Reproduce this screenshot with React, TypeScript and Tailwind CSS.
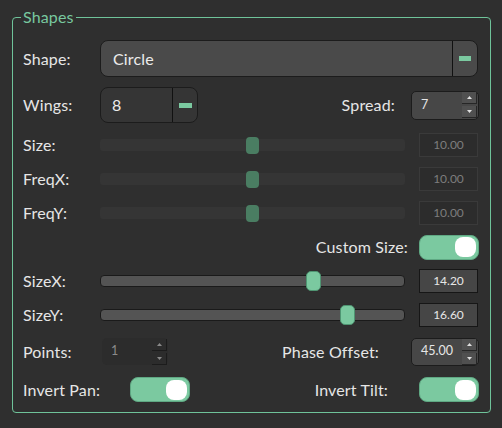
const font = { fontFamily: 'Lato, "Noto Sans", sans-serif' };

function Arrows({ disabled = false }: { disabled?: boolean }) {
  const btn = disabled
    ? "bg-[#2c2c2c] border-r border-b border-[#1c1c1c]"
    : "bg-[#505050] border-r border-b border-[#262626]";
  const fill = disabled ? "#8a8a8a" : "#e0e0e0";
  return (
    <div className="flex flex-col gap-[2px] justify-center">
      <div className={`w-[15px] h-[12px] flex items-center justify-center ${btn}`}>
        <svg width="5" height="3" viewBox="0 0 5 3">
          <polygon points="2.5,0 5,3 0,3" fill={fill} />
        </svg>
      </div>
      <div className={`w-[15px] h-[12px] flex items-center justify-center ${btn}`}>
        <svg width="5" height="3" viewBox="0 0 5 3">
          <polygon points="0,0 5,0 2.5,3" fill={fill} />
        </svg>
      </div>
    </div>
  );
}

function SpinBox({ value, w, h, disabled = false }: { value: string; w: string; h: string; disabled?: boolean }) {
  return (
    <div
      className={`${w} ${h} flex items-center justify-between pl-[9px] pr-[1px] rounded-[5px] text-[12.5px] tracking-normal ${
        disabled ? "bg-[#2c2c2c] text-[#8a8a8a]" : "bg-[#474747] border border-[#1c1c1c] text-[#e6e6e6]"
      }`}
    >
      <span>{value}</span>
      <Arrows disabled={disabled} />
    </div>
  );
}

function Toggle() {
  return (
    <div className="w-[60px] h-[25px] rounded-[8px] bg-[#7bc9a0] border border-[#5fa883] flex items-center justify-end pr-[2px]">
      <div className="w-[21px] h-[20px] rounded-[8px] bg-white" />
    </div>
  );
}

function DisabledSlider({ label }: { label: string }) {
  return (
    <div className="flex items-center h-[24px] mt-[10px]">
      <span className="w-[77px] text-[#e6e6e6]">{label}</span>
      <div className="relative w-[305px] h-[12px] rounded-[3px] bg-[#353535] flex items-center">
        <div className="absolute left-[146px] w-[13px] h-[17px] rounded-[4px] bg-[#4a7d62]" />
      </div>
      <div className="ml-[14px] w-[59px] h-[24px] bg-[#2c2c2c] border border-[#3a3a3a] flex items-center justify-center text-[12px] tracking-normal text-[#7d7d7d]">
        10.00
      </div>
    </div>
  );
}

function Slider({ label, pos, value }: { label: string; pos: number; value: string }) {
  return (
    <div className="flex items-center h-[24px] mt-[10px]">
      <span className="w-[77px] text-[#e6e6e6]">{label}</span>
      <div className="relative w-[305px] h-[12px] rounded-[4px] bg-[#545454] border border-[#1a1a1a] flex items-center">
        <div
          className="absolute w-[15px] h-[20px] rounded-[5px] bg-[#7bc9a0] border border-[#4f9572]"
          style={{ left: pos }}
        />
      </div>
      <div className="ml-[14px] w-[59px] h-[24px] bg-[#464646] border border-[#161616] flex items-center justify-center text-[12px] tracking-normal text-[#e6e6e6]">
        {value}
      </div>
    </div>
  );
}

export default function App() {
  return (
    <div className="w-[502px] h-[428px] bg-[#2f2f2f] pt-[8px] pl-[12px] text-[16px] tracking-[0.15px]" style={font}>
      <fieldset className="w-[479px] border border-[#6fc39a] rounded-[4px] pl-[10px] pr-[11px] pt-[14px] pb-[10px]">
        <legend className="ml-[-2px] px-[2px] text-[#78c89f] leading-[18px]">Shapes</legend>

        <div className="flex items-center h-[37px]">
          <span className="w-[77px] text-[#e6e6e6]">Shape:</span>
          <div className="w-[378px] h-[37px] rounded-[8px] bg-[#4a4a4a] border border-[#1c1c1c] flex">
            <div className="flex-1 flex items-center pl-[12px] text-[#ececec] border-r border-[#111]">Circle</div>
            <div className="w-[24px] flex items-center justify-center">
              <div className="w-[12px] h-[5px] bg-[#7bc9a0]" />
            </div>
          </div>
        </div>

        <div className="flex items-center h-[36px] mt-[10px]">
          <span className="w-[77px] text-[#e6e6e6]">Wings:</span>
          <div className="w-[98px] h-[36px] rounded-[8px] bg-[#353535] border border-[#1c1c1c] flex">
            <div className="flex-1 flex items-center pl-[11px] text-[#ececec] border-r border-[#111]">8</div>
            <div className="w-[24px] flex items-center justify-center">
              <div className="w-[13px] h-[5px] bg-[#7bc9a0]" />
            </div>
          </div>
          <span className="ml-auto mr-[16px] text-[#e6e6e6]">Spread:</span>
          <SpinBox value="7" w="w-[68px]" h="h-[29px]" />
        </div>

        <DisabledSlider label="Size:" />
        <DisabledSlider label="FreqX:" />
        <DisabledSlider label="FreqY:" />

        <div className="flex items-center justify-end h-[24px] mt-[10px]">
          <span className="mr-[11px] text-[#e6e6e6]">Custom Size:</span>
          <Toggle />
        </div>

        <Slider label="SizeX:" pos={205} value="14.20" />
        <Slider label="SizeY:" pos={239} value="16.60" />

        <div className="flex items-center h-[27px] mt-[11px]">
          <span className="w-[79px] text-[#e6e6e6]">Points:</span>
          <SpinBox value="1" w="w-[66px]" h="h-[27px]" disabled />
          <span className="ml-auto mr-[32px] text-[#e6e6e6]">Phase Offset:</span>
          <SpinBox value="45.00" w="w-[68px]" h="h-[28px]" />
        </div>

        <div className="flex items-center h-[25px] mt-[12px]">
          <span className="w-[107px] text-[#e6e6e6]">Invert Pan:</span>
          <Toggle />
          <span className="ml-auto mr-[31px] text-[#e6e6e6]">Invert Tilt:</span>
          <Toggle />
        </div>
      </fieldset>
    </div>
  );
}
